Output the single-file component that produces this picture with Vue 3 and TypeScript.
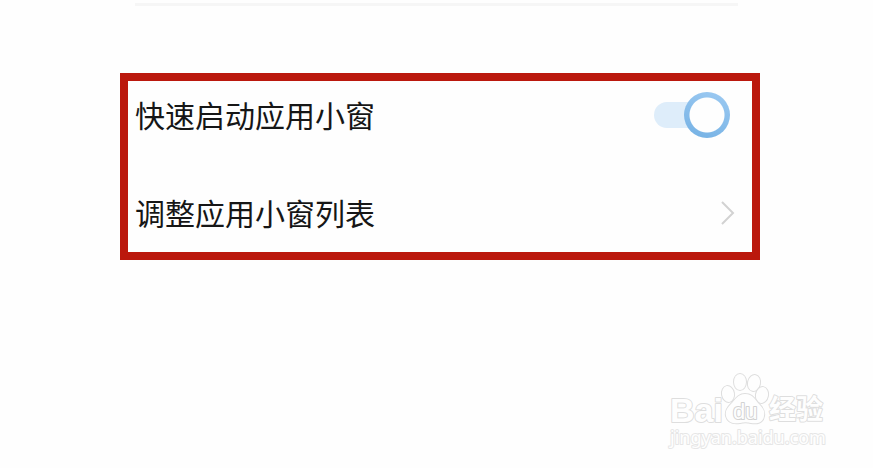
<script setup lang="ts">
import { ref } from 'vue'

const quickLaunch = ref<boolean>(true)
</script>

<template>
  <main class="page">
    <hr class="divider" />

    <section class="panel">
      <label class="row" for="quick-launch">
        <span class="name">快速启动应用小窗</span>
        <input id="quick-launch" v-model="quickLaunch" class="switch" type="checkbox" role="switch" />
      </label>
      <button class="row" type="button">
        <span class="name">调整应用小窗列表</span>
        <svg class="chevron" viewBox="0 0 16 26" aria-hidden="true">
          <path d="M2 2 L13 13 L2 24" />
        </svg>
      </button>
    </section>

    <svg class="watermark" viewBox="0 0 165 84" aria-hidden="true">
      <g class="outline">
        <text class="brand" x="4" y="54">Bai</text>
        <ellipse cx="62" cy="26" rx="6" ry="8" transform="rotate(-10 62 26)" />
        <ellipse cx="74" cy="14" rx="6" ry="8" />
        <ellipse cx="88" cy="15" rx="6" ry="8" transform="rotate(12 88 15)" />
        <ellipse cx="96" cy="27" rx="6" ry="8" transform="rotate(10 96 27)" />
        <path
          d="M79 26 C72 26 69 32 65 36 C61 40 59 43 60 48 C62 55 68 56 74 55 C78 54 81 54 85 55 C91 56 97 55 98 48 C99 43 97 40 93 36 C89 32 87 26 79 26 Z"
        />
        <text class="du" x="67" y="51">du</text>
        <text class="cjk" x="103" y="51">经验</text>
        <text class="url" x="4" y="76">jingyan.baidu.com</text>
      </g>
    </svg>
  </main>
</template>

<style>
body {
  margin: 0;
  background: #fefefe;
}
</style>

<style scoped>
.page {
  box-sizing: border-box;
  min-height: 100vh;
  padding: 3px 113px 0 120px;
  font-family: "Noto Sans CJK SC", sans-serif;
}

.divider {
  height: 3px;
  margin: 0 22px 67px 15px;
  border: 0;
  background: #f6f6f6;
}

.panel {
  display: flex;
  flex-direction: column;
  gap: 48px;
  padding: 9px 16px 14px 7px;
  border: 8px solid #bb180d;
}

.row {
  display: flex;
  align-items: center;
  justify-content: space-between;
  height: 50px;
  padding: 0;
  border: 0;
  background: none;
  color: #161616;
  font-family: inherit;
  font-size: 30px;
  line-height: 48px;
  text-align: left;
  cursor: pointer;
}

.name {
  padding-bottom: 2px;
}

.switch {
  position: relative;
  width: 76px;
  height: 46px;
  margin: 0 6px 0 0;
  appearance: none;
  cursor: pointer;
}

.switch::before {
  content: "";
  position: absolute;
  inset: 10px 6px 10px 0;
  border-radius: 13px;
  background: #deedfa;
}

.switch::after {
  content: "";
  position: absolute;
  top: 0;
  left: 0;
  box-sizing: border-box;
  width: 46px;
  height: 46px;
  border-radius: 50%;
  background: radial-gradient(circle, #fefefe 17px, transparent 18px), linear-gradient(20deg, #74b1e4, #9dcaf2);
}

.switch:checked::after {
  left: 30px;
}

.chevron {
  width: 16px;
  height: 26px;
  fill: none;
  stroke: #d2d2d2;
  stroke-width: 2;
}

.watermark {
  position: absolute;
  right: 42px;
  bottom: 16px;
  width: 165px;
  height: 84px;
}

.outline {
  fill: #fefefe;
  stroke: #dedede;
  stroke-width: 2;
  stroke-linejoin: round;
  paint-order: stroke;
}

.brand {
  font: bold 34px "Liberation Sans", sans-serif;
}

.du {
  stroke: #d2d2d2;
  font: 22px "Liberation Sans", sans-serif;
}

.cjk {
  font: bold 27px "Noto Sans CJK SC", sans-serif;
}

.url {
  stroke: #e6e6e6;
  font: 18px "Noto Sans", sans-serif;
}
</style>
